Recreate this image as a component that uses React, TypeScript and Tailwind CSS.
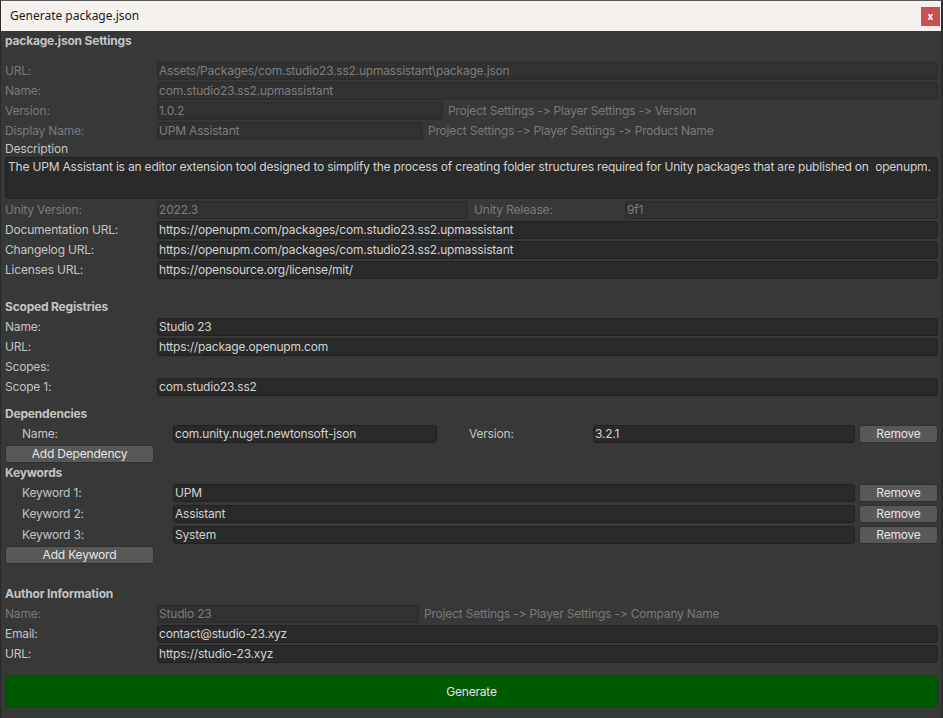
import React from 'react';

function Field({ value, disabled, className = '' }: { value: string; disabled?: boolean; className?: string }) {
  return (
    <div
      className={
        'h-[18px] rounded-[3px] border px-[1px] flex items-center text-[12px] whitespace-nowrap overflow-hidden ' +
        (disabled ? 'bg-[#313131] border-[#2b2b2b] text-[#7e7e7e] ' : 'bg-[#2a2a2a] border-[#212121] text-[#d2d2d2] ') +
        className
      }
    >
      {value}
    </div>
  );
}

function Btn({ children, className = '' }: { children: React.ReactNode; className?: string }) {
  return (
    <div
      className={
        'h-[18px] rounded-[3px] border border-[#303030] bg-[#585858] text-[#e4e4e4] text-[12px] flex items-center justify-center ' +
        className
      }
    >
      {children}
    </div>
  );
}

function Row({
  label,
  value,
  disabled,
  hint,
  fieldWidth,
}: {
  label: string;
  value: string;
  disabled?: boolean;
  hint?: string;
  fieldWidth?: string;
}) {
  return (
    <div className="h-5 flex items-center">
      <div className={'w-[152px] shrink-0 text-[12px] ' + (disabled ? 'text-[#7a7a7a]' : 'text-[#c4c4c4]')}>{label}</div>
      {fieldWidth ? (
        <>
          <Field value={value} disabled={disabled} className={fieldWidth + ' shrink-0'} />
          {hint && <div className="ml-[5px] text-[12px] text-[#7a7a7a] whitespace-nowrap">{hint}</div>}
        </>
      ) : (
        <Field value={value} disabled={disabled} className="flex-1" />
      )}
    </div>
  );
}

function Header({ children, className = '' }: { children: React.ReactNode; className?: string }) {
  return <div className={'flex items-center text-[12px] font-bold text-[#c4c4c4] ' + className}>{children}</div>;
}

function KeywordRow({ n, value }: { n: number; value: string }) {
  return (
    <div className="h-[21px] flex items-center">
      <div className="w-[168px] shrink-0 pl-[17px] text-[12px] text-[#c4c4c4]">Keyword {n}:</div>
      <Field value={value} className="flex-1" />
      <Btn className="w-[79px] ml-[4px] shrink-0">Remove</Btn>
    </div>
  );
}

export default function App() {
  return (
    <div className="w-[943px] h-[718px] bg-[#383838] flex flex-col border-t border-[#5a5a5a] border-l border-l-[#2a2a2a] border-r-2 border-r-[#2e2e2e] font-['Inter','Noto_Sans',sans-serif] tracking-[-0.19px] [font-variant-ligatures:none] [font-feature-settings:'calt'_0]">
      {/* title bar */}
      <div className="h-[30px] shrink-0 bg-[#f4f1ef] flex items-center justify-between pl-[9px] pr-[1px] tracking-normal">
        <span className="text-[12px] text-[#1a1a1a] font-['Noto_Sans','Open_Sans',sans-serif]">Generate package.json</span>
        <div className="w-[19px] h-[19px] bg-[#c85050] flex items-center justify-center text-white text-[10px] font-bold leading-none">
          x
        </div>
      </div>

      <div className="flex-1 flex flex-col px-[4px] pr-[3px]">
        <Header className="h-5">package.json Settings</Header>
        <div className="h-[10px]" />
        <Row label="URL:" value="Assets/Packages/com.studio23.ss2.upmassistant\package.json" disabled />
        <Row label="Name:" value="com.studio23.ss2.upmassistant" disabled />
        <Row
          label="Version:"
          value="1.0.2"
          disabled
          fieldWidth="w-[286px]"
          hint="Project Settings -> Player Settings -> Version"
        />
        <Row
          label="Display Name:"
          value="UPM Assistant"
          disabled
          fieldWidth="w-[266px]"
          hint="Project Settings -> Player Settings -> Product Name"
        />
        <div className="h-[16px] flex items-center text-[12px] text-[#c4c4c4]">Description</div>
        <div className="h-[42px] rounded-[3px] border border-[#212121] bg-[#2a2a2a] px-[2px] text-[12px] text-[#d2d2d2] whitespace-nowrap overflow-hidden">
          The UPM Assistant is an editor extension tool designed to simplify the process of creating folder structures
          required for Unity packages that are published on&nbsp; openupm.
        </div>
        <div className="h-5 flex items-center mt-[1px]">
          <div className="w-[152px] shrink-0 text-[12px] text-[#7a7a7a]">Unity Version:</div>
          <Field value="2022.3" disabled className="w-[311px] shrink-0" />
          <div className="w-[157px] shrink-0 pl-[6px] text-[12px] text-[#7a7a7a]">Unity Release:</div>
          <Field value="9f1" disabled className="flex-1" />
        </div>
        <Row label="Documentation URL:" value="https://openupm.com/packages/com.studio23.ss2.upmassistant" />
        <Row label="Changelog URL:" value="https://openupm.com/packages/com.studio23.ss2.upmassistant" />
        <Row label="Licenses URL:" value="https://opensource.org/license/mit/" />

        <Header className="h-5 mt-[17px]">Scoped Registries</Header>
        <Row label="Name:" value="Studio 23" />
        <Row label="URL:" value="https://package.openupm.com" />
        <div className="h-5 flex items-center text-[12px] text-[#c4c4c4]">Scopes:</div>
        <Row label="Scope 1:" value="com.studio23.ss2" />

        <Header className="h-5 mt-[7px]">Dependencies</Header>
        <div className="h-5 flex items-center">
          <div className="w-[168px] shrink-0 pl-[17px] text-[12px] text-[#c4c4c4]">Name:</div>
          <Field value="com.unity.nuget.newtonsoft-json" className="w-[264px] shrink-0" />
          <div className="w-[156px] shrink-0 pl-[32px] text-[12px] text-[#c4c4c4]">Version:</div>
          <Field value="3.2.1" className="flex-1" />
          <Btn className="w-[79px] ml-[4px] shrink-0">Remove</Btn>
        </div>
        <div className="h-5 flex items-center">
          <Btn className="w-[149px]">Add Dependency</Btn>
        </div>
        <Header className="h-[19px] -mt-[1px]">Keywords</Header>
        <KeywordRow n={1} value="UPM" />
        <KeywordRow n={2} value="Assistant" />
        <KeywordRow n={3} value="System" />
        <div className="h-5 flex items-center">
          <Btn className="w-[149px]">Add Keyword</Btn>
        </div>

        <Header className="h-5 mt-[19px]">Author Information</Header>
        <Row
          label="Name:"
          value="Studio 23"
          disabled
          fieldWidth="w-[262px]"
          hint="Project Settings -> Player Settings -> Company Name"
        />
        <Row label="Email:" value="contact@studio-23.xyz" />
        <Row label="URL:" value="https://studio-23.xyz" />

        <div className="mt-[11px] h-[33px] rounded-[3px] border border-[#1f3a1f] bg-[#005a00] flex items-center justify-center text-[12px] text-[#e4e4e4]">
          Generate
        </div>
      </div>
    </div>
  );
}
